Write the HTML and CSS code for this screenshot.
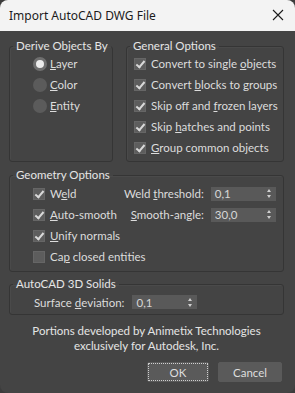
FILE: index.html
```html
<!DOCTYPE html>
<html lang="en">
<head>
  <meta charset="UTF-8">
  <title>Import AutoCAD DWG File</title>
  <link rel="stylesheet" href="styles.css">
</head>
<body>
  <div class="dialog">
    <div class="titlebar">
      <span class="title">Import AutoCAD DWG File</span>
      <svg class="close" width="12" height="12" viewBox="0 0 12 12"><path d="M1 1 L11 11 M11 1 L1 11" stroke="#1b1b1b" stroke-width="1.1" fill="none"/></svg>
    </div>

    <div class="content">
      <div class="top-row">
        <fieldset class="group derive">
          <legend>Derive Objects By</legend>
          <div class="group-body">
            <div class="row"><span class="radio on"></span><span><u>L</u>ayer</span></div>
            <div class="row"><span class="radio"></span><span><u>C</u>olor</span></div>
            <div class="row"><span class="radio"></span><span><u>E</u>ntity</span></div>
          </div>
        </fieldset>

        <fieldset class="group general">
          <legend>General Options</legend>
          <div class="group-body">
            <div class="row"><span class="check on"></span><span>Convert to single <u>o</u>bjects</span></div>
            <div class="row"><span class="check on"></span><span>Convert <u>b</u>locks to groups</span></div>
            <div class="row"><span class="check on"></span><span>Skip off and <u>f</u>rozen layers</span></div>
            <div class="row"><span class="check on"></span><span>Skip <u>h</u>atches and points</span></div>
            <div class="row"><span class="check on"></span><span><u>G</u>roup common objects</span></div>
          </div>
        </fieldset>
      </div>

      <fieldset class="group geometry">
        <legend>Geometry Options</legend>
        <div class="group-body geo-grid">
          <div class="row"><span class="check on"></span><span>W<u>e</u>ld</span></div>
          <span class="field-label">Weld <u>t</u>hreshold:</span>
          <div class="spinner"><span>0,1</span><span class="arrows"></span></div>

          <div class="row"><span class="check on"></span><span><u>A</u>uto-smooth</span></div>
          <span class="field-label"><u>S</u>mooth-angle:</span>
          <div class="spinner"><span>30,0</span><span class="arrows"></span></div>

          <div class="row wide"><span class="check on"></span><span><u>U</u>nify normals</span></div>
          <div class="row wide"><span class="check"></span><span>Ca<u>p</u> closed entities</span></div>
        </div>
      </fieldset>

      <fieldset class="group solids">
        <legend>AutoCAD 3D Solids</legend>
        <div class="group-body">
          <div class="row">
            <span class="field-label">Surface <u>d</u>eviation:</span>
            <div class="spinner"><span>0,1</span><span class="arrows"></span></div>
          </div>
        </div>
      </fieldset>

      <p class="credits">Portions developed by Animetix Technologies<br>exclusively for Autodesk, Inc.</p>

      <div class="buttons">
        <button class="btn focused">OK</button>
        <button class="btn">Cancel</button>
      </div>
    </div>
  </div>
</body>
</html>
```

FILE: styles.css
```css
html {
  background: #3c3c3c;
}

body {
  margin: 0;
  font-family: Lato, 'Noto Sans', sans-serif;
  font-size: 11.5px;
  color: #dcdcdc;
}

.dialog {
  width: 295px;
  height: 393px;
  background: #444444;
  border-radius: 8px;
  overflow: hidden;
  display: flex;
  flex-direction: column;
}

.titlebar {
  height: 31px;
  flex: none;
  background: #f3f3f3;
  color: #1b1b1b;
  font-family: 'Noto Sans', sans-serif;
  font-size: 12px;
  display: flex;
  align-items: center;
  justify-content: space-between;
  padding: 0 11px 0 9px;
}

.close {
  margin-top: -1px;
}

.content {
  padding: 8px 11px 0 9px;
}

.top-row {
  display: flex;
  gap: 13px;
}

.group {
  margin: 0;
  min-width: 0;
  padding: 0 0 0 3px;
  border: 1px solid #353535;
  border-radius: 3px;
  box-shadow: inset 1px 1px 0 #4a4a4a;
}

.group legend {
  padding: 0 3px;
  line-height: 14px;
  color: #e6e6e6;
  white-space: nowrap;
}

.derive {
  width: 104px;
  box-sizing: border-box;
}

.derive .group-body {
  padding: 0 0 3px 20px;
}

.general {
  flex: 1;
}

.general .group-body {
  padding: 0 0 3px 4px;
}

.row {
  display: flex;
  align-items: center;
  gap: 5px;
  height: 21px;
  white-space: nowrap;
}

.derive .row {
  gap: 3px;
}

.radio {
  width: 14px;
  height: 14px;
  border-radius: 50%;
  background: #5b5b5b;
  box-sizing: border-box;
  flex: none;
}

.radio.on {
  background: #ececec;
  border: 3px solid #6f6f6f;
}

.check {
  width: 12px;
  height: 12px;
  background: #5d5d5d;
  box-shadow: inset 0 0 0 1px #666;
  flex: none;
  position: relative;
}

.check.on::after {
  content: '';
  position: absolute;
  left: 4px;
  top: 1px;
  width: 3px;
  height: 7px;
  border: solid #d9d9d9;
  border-width: 0 2px 2px 0;
  transform: rotate(40deg);
}

.geometry {
  margin-top: 6px;
}

.geo-grid {
  display: grid;
  grid-template-columns: 1fr auto 65px;
  column-gap: 7px;
  align-items: center;
  padding: 1px 8px 4px 20px;
}

.geo-grid .wide {
  grid-column: 1 / -1;
}

.field-label {
  text-align: right;
  white-space: nowrap;
}

.spinner {
  height: 14px;
  background: #595959;
  display: flex;
  align-items: center;
  justify-content: space-between;
  padding: 0 4px;
  color: #d6d6d6;
  box-sizing: border-box;
}

.arrows {
  width: 5px;
  height: 9px;
  position: relative;
}

.arrows::before,
.arrows::after {
  content: '';
  position: absolute;
  left: 0;
  border-left: 2.5px solid transparent;
  border-right: 2.5px solid transparent;
}

.arrows::before {
  top: 0;
  border-bottom: 3px solid #d0d0d0;
}

.arrows::after {
  bottom: 0;
  border-top: 3px solid #d0d0d0;
}

.solids {
  margin-top: 5px;
}

.solids .group-body {
  padding: 2px 0 3px 21px;
}

.solids .row {
  height: 18px;
  gap: 8px;
}

.solids .spinner {
  width: 65px;
}

.credits {
  margin: 8px 0 0;
  text-align: center;
  line-height: 15px;
  color: #e4e4e4;
}

.buttons {
  display: flex;
  justify-content: flex-end;
  gap: 9px;
  margin-top: 9px;
  padding-right: 2px;
}

.btn {
  height: 20px;
  background: #5a5a5a;
  border: 1px solid #5a5a5a;
  border-radius: 2px;
  color: #dedede;
  font-family: inherit;
  font-size: 11.5px;
  padding: 0;
}

.btn.focused {
  width: 62px;
  outline: 1px dotted #cfcfcf;
  outline-offset: -2px;
}

.btn:not(.focused) {
  width: 64px;
}
```
